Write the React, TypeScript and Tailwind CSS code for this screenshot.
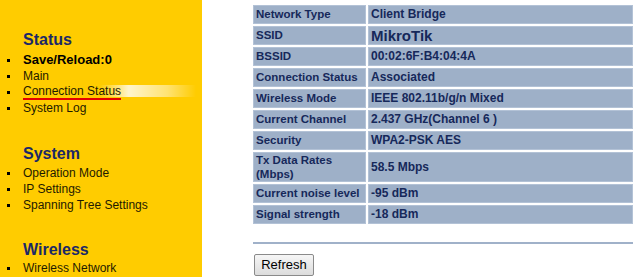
import React from "react";

const rows: { label: React.ReactNode; value: React.ReactNode; tall?: boolean; big?: boolean }[] = [
  { label: "Network Type", value: "Client Bridge" },
  { label: "SSID", value: "MikroTik", big: true },
  { label: "BSSID", value: "00:02:6F:B4:04:4A" },
  { label: "Connection Status", value: "Associated" },
  { label: "Wireless Mode", value: "IEEE 802.11b/g/n Mixed" },
  { label: "Current Channel", value: "2.437 GHz(Channel 6 )" },
  { label: "Security", value: "WPA2-PSK AES" },
  { label: <>Tx Data Rates<br />(Mbps)</>, value: "58.5 Mbps", tall: true },
  { label: "Current noise level", value: "-95 dBm" },
  { label: "Signal strength", value: "-18 dBm" },
];

function Item({ children, bold, active }: { children: React.ReactNode; bold?: boolean; active?: boolean }) {
  return (
    <div className="relative flex items-center h-[16px]">
      <div className="w-[23px] pl-[7px] flex items-center">
        <span className="block w-[3px] h-[3px] bg-black" />
      </div>
      {active && (
        <div className="absolute left-[100px] top-[1px] w-[96px] h-[12px] bg-[linear-gradient(to_right,rgba(255,255,255,0)_0%,rgba(255,255,255,0.8)_30%,rgba(255,255,255,0.45)_70%,rgba(255,255,255,0)_100%)]" />
      )}
      <span
        className={
          "relative whitespace-nowrap " +
          (bold ? "text-[13px] font-bold text-black" : "text-[12px] text-[#1e1a00]") +
          (active ? " border-b-[2px] border-[#e30000] leading-[14px]" : "")
        }
      >
        {children}
      </span>
    </div>
  );
}

function Header({ children }: { children: React.ReactNode }) {
  return (
    <div className="pl-[23px] h-[20px] flex items-center text-[16px] font-bold text-[#1b2867] leading-[20px]">
      {children}
    </div>
  );
}

export default function App() {
  return (
    <div
      className="flex w-[640px] h-[277px] overflow-hidden bg-white"
      style={{ fontFamily: '"Liberation Sans", Arial, sans-serif' }}
    >
      <div className="w-[202px] h-[277px] bg-[#ffcc00] pt-[30px] shrink-0">
        <Header>Status</Header>
        <div className="mt-[2px]">
          <Item bold>Save/Reload:0</Item>
          <Item>Main</Item>
          <Item active>Connection Status</Item>
          <Item>System Log</Item>
        </div>
        <div className="mt-[28px]">
          <Header>System</Header>
          <div className="mt-[1px]">
            <Item>Operation Mode</Item>
            <Item>IP Settings</Item>
            <Item>Spanning Tree Settings</Item>
          </div>
        </div>
        <div className="mt-[27px]">
          <Header>Wireless</Header>
          <div>
            <Item>Wireless Network</Item>
          </div>
        </div>
      </div>
      <div className="pl-[49px] pt-[3px] flex flex-col">
        <table className="border-separate border-spacing-[2px] w-[384px] text-[#16285a] font-bold text-[12px]">
          <tbody>
            {rows.map((r, i) => (
              <tr key={i}>
                <td
                  className={
                    "w-[113px] bg-[#9eb0c8] border border-[#b3c2d6] px-[2px] align-middle whitespace-nowrap text-[11.5px] " +
                    (r.tall ? "h-[30px] leading-[14px]" : "h-[19px] leading-[15px]")
                  }
                >
                  {r.label}
                </td>
                <td
                  className={
                    "bg-[#9eb0c8] border border-[#b3c2d6] px-[2px] align-middle leading-[15px] whitespace-nowrap " +
                    (r.big ? "text-[15px] leading-[15px]" : "")
                  }
                >
                  {r.value}
                </td>
              </tr>
            ))}
          </tbody>
        </table>
        <div className="ml-[2px] mt-[16px] w-[380px] h-[2px] bg-[#a0b1c9]" />
        <div className="ml-[3px] mt-[10px] flex">
          <button className="w-[60px] h-[22px] text-[13px] text-black border border-[#8a8a8a] rounded-[2px] bg-[linear-gradient(to_bottom,#f6f6f6,#dcdcdc)] leading-[20px]">
            Refresh
          </button>
        </div>
      </div>
    </div>
  );
}
